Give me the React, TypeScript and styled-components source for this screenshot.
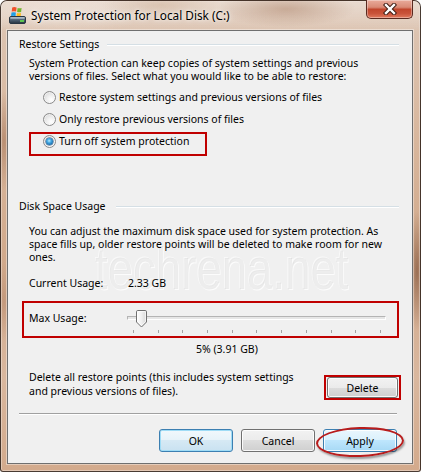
import React from "react";
import styled, { createGlobalStyle } from "styled-components";

const GlobalStyle = createGlobalStyle`
  html, body { margin: 0; padding: 0; background: #ffffff; }
  body {
    width: 421px;
    height: 472px;
    overflow: hidden;
    font-family: "Noto Sans", "Open Sans", sans-serif;
    font-size: 10.5px;
    color: #000;
  }
  * { box-sizing: border-box; }
`;

const Window = styled.div`
  width: 421px;
  height: 472px;
  display: flex;
  flex-direction: column;
  padding: 0 7px 7px 6px;
  border: 1px solid rgba(45, 32, 25, 0.85);
  border-radius: 7px 7px 3px 3px;
  background:
    radial-gradient(ellipse 10px 50px at 3px 140px, rgba(160, 110, 80, 0.55), transparent),
    radial-gradient(ellipse 8px 60px at 416px 270px, rgba(130, 85, 60, 0.7), transparent),
    radial-gradient(ellipse 8px 40px at 3px 300px, rgba(170, 120, 90, 0.4), transparent),
    linear-gradient(to bottom, #e6d6ca 0%, #dcc3b0 7%, #d8b69c 30%, #d1a98b 55%, #d9b79e 80%, #d3aa8c 100%);
  box-shadow: inset 0 0 0 1px rgba(255, 255, 255, 0.35);
`;

const TitleBar = styled.div`
  height: 29px;
  display: flex;
  align-items: flex-start;
  margin: 0 -7px 0 -6px;
  padding: 0 7px 0 7px;
  border-radius: 6px 6px 0 0;
  background:
    radial-gradient(ellipse 70px 18px at 285px 8px, rgba(175, 135, 110, 0.55), transparent),
    radial-gradient(ellipse 60px 14px at 160px 4px, rgba(205, 175, 150, 0.5), transparent),
    radial-gradient(ellipse 90px 20px at 60px 12px, rgba(240, 230, 222, 0.6), transparent),
    linear-gradient(to bottom, rgba(235, 222, 212, 0.6), rgba(220, 196, 178, 0.2));
`;

const AppIcon = styled.svg`
  margin-top: 5px;
  margin-left: 1px;
  flex: none;
`;

const Title = styled.div`
  margin-top: 6px;
  margin-left: 5px;
  font-size: 11.8px;
  line-height: 16px;
  color: #000;
  text-shadow: 0 0 6px rgba(255, 255, 255, 0.9), 0 0 3px rgba(255, 255, 255, 0.7);
  white-space: nowrap;
`;

const CloseButton = styled.div`
  margin-left: auto;
  margin-top: -1px;
  width: 47px;
  height: 19px;
  display: flex;
  align-items: center;
  justify-content: center;
  border: 1px solid #5a2a20;
  border-top: none;
  border-radius: 0 0 5px 5px;
  background: linear-gradient(
    to bottom,
    #e9ab9b 0%,
    #d98a76 40%,
    #c1462d 52%,
    #c9533a 75%,
    #e07a5e 100%
  );
  box-shadow: inset 0 0 0 1px rgba(255, 255, 255, 0.35);
`;

const Client = styled.div`
  position: relative;
  isolation: isolate;
  flex: 1;
  display: flex;
  flex-direction: column;
  padding: 6px 13px 10px 11px;
  background: #f0f0f0;
  border: 1px solid #6f6f6f;
  box-shadow: 0 0 0 1px rgba(255, 255, 255, 0.4);
  overflow: hidden;
`;

const Watermark = styled.div`
  position: absolute;
  z-index: -1;
  left: 87px;
  top: 208px;
  font-family: "Liberation Sans", Arial, sans-serif;
  font-size: 60px;
  line-height: 60px;
  color: rgba(0, 0, 0, 0.065);
  text-shadow: 1px 1px 0 rgba(255, 255, 255, 0.8), -1px -1px 0 rgba(255, 255, 255, 0.6);
  transform: scaleX(0.76);
  transform-origin: left top;
  white-space: nowrap;
  pointer-events: none;
`;

const GroupHeader = styled.div<{ $top: number }>`
  display: flex;
  align-items: center;
  height: 14px;
  line-height: 14px;
  margin-top: ${(p) => p.$top}px;
  white-space: nowrap;
`;

const GroupLine = styled.div<{ $gap: number }>`
  flex: 1;
  height: 1px;
  margin-left: ${(p) => p.$gap}px;
  background: #d5dfe5;
  box-shadow: 0 1px 0 #ffffff;
`;

const Paragraph = styled.div<{ $top: number; $lh?: number }>`
  margin-top: ${(p) => p.$top}px;
  margin-left: 10px;
  line-height: ${(p) => p.$lh ?? 13}px;
  white-space: nowrap;
`;

const RadioList = styled.div`
  margin-top: 6px;
  margin-left: 24px;
  display: flex;
  flex-direction: column;
  gap: 6px;
`;

const RadioRow = styled.div<{ $highlight?: boolean }>`
  position: relative;
  display: flex;
  align-items: center;
  height: 16px;
  white-space: nowrap;
  &::before {
    content: "";
    display: ${(p) => (p.$highlight ? "block" : "none")};
    position: absolute;
    left: -14px;
    top: -1px;
    width: 174px;
    height: 20px;
    border: 2px solid #c00000;
  }
`;

const RadioCircle = styled.span<{ $checked?: boolean }>`
  position: relative;
  flex: none;
  width: 13px;
  height: 13px;
  border-radius: 50%;
  border: 1px solid #8a8a8a;
  background: radial-gradient(circle at 65% 70%, #ffffff 0%, #f1f1f1 35%, #d0d0d0 100%);
  box-shadow: inset 0 0 0 1px rgba(255, 255, 255, 0.5);
  &::after {
    content: "";
    display: ${(p) => (p.$checked ? "block" : "none")};
    position: absolute;
    left: 2px;
    top: 2px;
    width: 7px;
    height: 7px;
    border-radius: 50%;
    background: radial-gradient(circle at 45% 40%, #b8ecff 0%, #43a8e3 35%, #11609f 80%, #0b4577 100%);
    box-shadow: 0 0 0 0.5px #1d4f7c;
  }
`;

const RadioLabel = styled.span`
  margin-left: 3px;
  line-height: 16px;
`;

const InfoRow = styled.div`
  display: flex;
  margin-top: 13px;
  margin-left: 10px;
  line-height: 13px;
`;

const InfoLabel = styled.span`
  width: 99px;
  flex: none;
`;

const SliderRow = styled.div<{ $highlight?: boolean }>`
  display: flex;
  height: 37px;
  margin-top: 11px;
  margin-left: 3px;
  padding-left: 5px;
  border: 2px solid ${(p) => (p.$highlight ? "#c00000" : "transparent")};
`;

const SliderLabel = styled.span`
  width: 98px;
  flex: none;
  margin-top: 8px;
  line-height: 14px;
`;

const Slider = styled.div`
  width: 259px;
  padding-top: 7px;
  display: flex;
  flex-direction: column;
`;

const ThumbArea = styled.div`
  position: relative;
  height: 18px;
`;

const Track = styled.div`
  position: absolute;
  left: 0;
  right: 0;
  top: 6px;
  height: 4px;
  border: 1px solid #b4b4b4;
  border-bottom-color: #ffffff;
  border-right-color: #ffffff;
  background: #e6e6e6;
`;

const Thumb = styled.svg`
  position: absolute;
  top: 0;
`;

const Ticks = styled.div`
  margin-top: 2px;
  height: 3px;
  display: flex;
  justify-content: space-between;
  padding: 0 5px 0 6px;
`;

const Tick = styled.span`
  width: 1px;
  height: 3px;
  background: #a3a3a3;
`;

const Percent = styled.div`
  margin-top: 4px;
  margin-left: 177px;
  line-height: 14px;
`;

const DeleteRow = styled.div`
  display: flex;
  justify-content: space-between;
  margin-top: 14px;
  margin-right: -2px;
`;

const Highlight = styled.div<{ $on?: boolean }>`
  margin-top: 5px;
  align-self: flex-start;
  padding: 0 1px;
  border: 2px solid ${(p) => (p.$on ? "#c00000" : "transparent")};
`;

const Separator = styled.div`
  margin-top: 13px;
  margin-right: 2px;
  height: 1px;
  background: #a0a0a0;
  box-shadow: 0 1px 0 #ffffff;
`;

const ButtonRow = styled.div`
  display: flex;
  justify-content: flex-end;
  gap: 8px;
  margin-top: 15px;
  margin-right: 2px;
`;

type Variant = "normal" | "default" | "hover";

const Button = styled.button<{ $variant?: Variant; $circled?: boolean; $w?: number; $h?: number }>`
  position: relative;
  width: ${(p) => p.$w ?? 74}px;
  height: ${(p) => p.$h ?? 23}px;
  padding: 0;
  font: inherit;
  font-size: 10.5px;
  color: #000;
  border-radius: 3px;
  border: 1px solid ${(p) => (p.$variant === "normal" || !p.$variant ? "#707070" : "#3c7fb1")};
  background: ${(p) =>
    p.$variant === "hover"
      ? "linear-gradient(to bottom, #eaf6fd 0%, #d9f0fc 50%, #bee6fd 50%, #a7d9f5 100%)"
      : p.$variant === "default"
      ? "linear-gradient(to bottom, #f1f8fc 0%, #e6f2f9 50%, #d6e9f4 50%, #c9e2f1 100%)"
      : "linear-gradient(to bottom, #f2f2f2 0%, #ebebeb 50%, #dddddd 50%, #cfcfcf 100%)"};
  box-shadow: inset 0 0 0 1px
    ${(p) => (p.$variant === "default" ? "#9fdcf6" : "rgba(255,255,255,0.85)")};
  &::after {
    content: "";
    display: ${(p) => (p.$circled ? "block" : "none")};
    position: absolute;
    left: -8px;
    right: -8px;
    top: -3px;
    bottom: -6px;
    border: 2px solid #b81c1c;
    border-radius: 50%;
    transform: rotate(-2deg);
    box-shadow: 1px 2px 2px rgba(0, 0, 0, 0.35);
  }
`;

const ticks = Array.from({ length: 11 }, (_, i) => i);

export default function App() {
  return (
    <>
      <GlobalStyle />
      <Window>
        <TitleBar>
          <AppIcon width="17" height="18" viewBox="0 0 17 18">
            <defs>
              <linearGradient id="drv" x1="0" y1="0" x2="0" y2="1">
                <stop offset="0" stopColor="#9fb0bf" />
                <stop offset="0.35" stopColor="#5a6d80" />
                <stop offset="1" stopColor="#27323f" />
              </linearGradient>
            </defs>
            <path d="M3.2 1.6 Q5.2 0.6 7.6 1.6 L7.1 5.6 Q4.8 4.7 2.7 5.6Z" fill="#f0502a" />
            <path d="M8.6 1.9 Q10.6 2.7 12.6 1.9 L12.1 5.9 Q10.1 6.7 8.1 5.9Z" fill="#72b52b" />
            <path d="M2.5 6.6 Q4.7 5.7 6.9 6.6 L6.5 10.2 Q4.2 9.4 2 10.2Z" fill="#1e9ee6" />
            <path d="M7.9 6.9 Q10 7.7 12 6.9 L11.6 10.4 Q9.6 11.1 7.5 10.4Z" fill="#fdbb1a" />
            <rect x="0.5" y="10.5" width="16" height="7" rx="1.5" fill="url(#drv)" stroke="#2a3642" />
            <rect x="1.5" y="11.2" width="14" height="1.5" fill="#c8d4de" opacity="0.7" />
            <rect x="11" y="14.2" width="4" height="1.6" fill="#63e24a" />
          </AppIcon>
          <Title>System Protection for Local Disk (C:)</Title>
          <CloseButton>
            <svg width="14" height="12" viewBox="0 0 14 12">
              <path d="M3 2 L11 10 M11 2 L3 10" stroke="#3d1a12" strokeWidth="4.4" strokeLinecap="square" />
              <path d="M3 2 L11 10 M11 2 L3 10" stroke="#ffffff" strokeWidth="2.4" strokeLinecap="square" />
            </svg>
          </CloseButton>
        </TitleBar>
        <Client>
          <Watermark>techrena.net</Watermark>
          <GroupHeader $top={0}>
            Restore Settings
            <GroupLine $gap={8} />
          </GroupHeader>
          <Paragraph $top={6}>
            System Protection can keep copies of system settings and previous
            <br />
            versions of files. Select what you would like to be able to restore:
          </Paragraph>
          <RadioList>
            <RadioRow>
              <RadioCircle />
              <RadioLabel>Restore system settings and previous versions of files</RadioLabel>
            </RadioRow>
            <RadioRow>
              <RadioCircle />
              <RadioLabel>Only restore previous versions of files</RadioLabel>
            </RadioRow>
            <RadioRow $highlight>
              <RadioCircle $checked />
              <RadioLabel>Turn off system protection</RadioLabel>
            </RadioRow>
          </RadioList>
          <GroupHeader $top={50}>
            Disk Space Usage
            <GroupLine $gap={10} />
          </GroupHeader>
          <Paragraph $top={12}>
            You can adjust the maximum disk space used for system protection. As
            <br />
            space fills up, older restore points will be deleted to make room for new
            <br />
            ones.
          </Paragraph>
          <InfoRow>
            <InfoLabel>Current Usage:</InfoLabel>
            <span>2.33 GB</span>
          </InfoRow>
          <SliderRow $highlight>
            <SliderLabel>Max Usage:</SliderLabel>
            <Slider>
              <ThumbArea>
                <Track />
                <Thumb width="11" height="18" viewBox="0 0 11 18" style={{ left: 9 }}>
                  <defs>
                    <linearGradient id="thumb" x1="0" y1="0" x2="1" y2="0">
                      <stop offset="0" stopColor="#ffffff" />
                      <stop offset="0.5" stopColor="#f0f0f0" />
                      <stop offset="1" stopColor="#d6d6d6" />
                    </linearGradient>
                  </defs>
                  <path
                    d="M1.8 0.5 H9.2 Q10.5 0.5 10.5 1.8 V12 L5.5 17 L0.5 12 V1.8 Q0.5 0.5 1.8 0.5 Z"
                    fill="url(#thumb)"
                    stroke="#707070"
                  />
                  <path d="M1.6 1.6 H9.4 V11.6 L5.5 15.5 L1.6 11.6 Z" fill="none" stroke="#ffffff" strokeOpacity="0.7" />
                </Thumb>
              </ThumbArea>
              <Ticks>
                {ticks.map((t) => (
                  <Tick key={t} />
                ))}
              </Ticks>
            </Slider>
          </SliderRow>
          <Percent>5% (3.91 GB)</Percent>
          <DeleteRow>
            <Paragraph $top={0} $lh={14}>
              Delete all restore points (this includes system settings
              <br />
              and previous versions of files).
            </Paragraph>
            <Highlight $on>
              <Button $w={71} $h={21}>Delete</Button>
            </Highlight>
          </DeleteRow>
          <Separator />
          <ButtonRow>
            <Button $variant="default">OK</Button>
            <Button>Cancel</Button>
            <Button $variant="hover" $circled>
              Apply
            </Button>
          </ButtonRow>
        </Client>
      </Window>
    </>
  );
}
